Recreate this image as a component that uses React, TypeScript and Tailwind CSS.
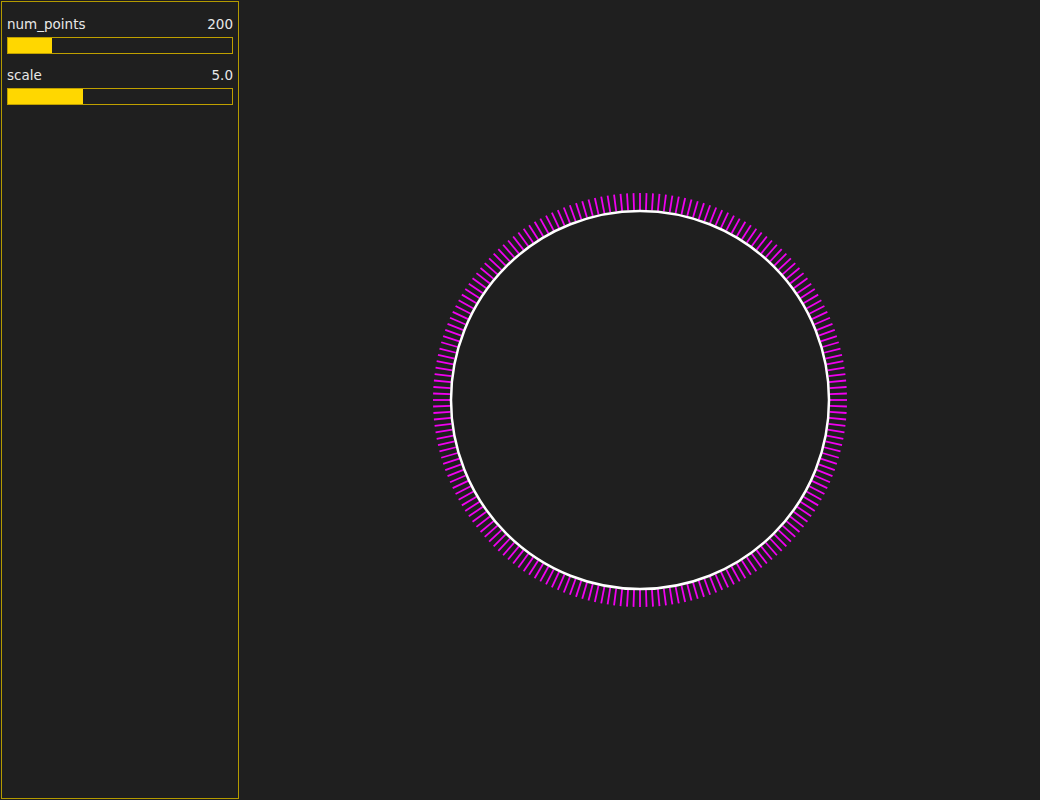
import React from "react";

const N = 200;

function Slider({ label, value, frac }: { label: string; value: string; frac: number }) {
  return (
    <div className="flex flex-col">
      <div className="flex justify-between h-[15px] leading-[15px] text-[13.5px] text-[#e8e8e8]">
        <span>{label}</span>
        <span>{value}</span>
      </div>
      <div className="mt-[5px] h-[17px] border border-[#bfa000] bg-[#1f1f1f] flex">
        <div className="h-full bg-[#ffd700]" style={{ width: `${frac * 100}%` }} />
      </div>
    </div>
  );
}

export default function App() {
  const cx = 400;
  const cy = 400;
  const r = 189;
  const ticks = Array.from({ length: N }, (_, i) => {
    const a = (i / N) * Math.PI * 2;
    const c = Math.cos(a);
    const s = Math.sin(a);
    return (
      <line
        key={i}
        x1={cx + c * (r + 1)}
        y1={cy + s * (r + 1)}
        x2={cx + c * (r + 18)}
        y2={cy + s * (r + 18)}
        stroke="#f000f0"
        strokeWidth={1.8}
      />
    );
  });
  return (
    <div
      className="w-[1040px] h-[800px] bg-[#1f1f1f] flex overflow-hidden"
      style={{ fontFamily: '"DejaVu Sans", sans-serif' }}
    >
      <div className="w-[240px] h-[800px] p-[1px] shrink-0">
        <div className="w-[238px] h-[798px] border-[1.5px] border-[#b39a00] px-[5px] pt-[15px] flex flex-col gap-[14px]">
          <Slider label="num_points" value="200" frac={0.195} />
          <Slider label="scale" value="5.0" frac={0.333} />
        </div>
      </div>
      <div className="flex-1 flex items-center justify-center">
        <svg width={800} height={800} viewBox="0 0 800 800">
          {ticks}
          <circle cx={cx} cy={cy} r={r} fill="none" stroke="#ffffff" strokeWidth={2.5} />
        </svg>
      </div>
    </div>
  );
}
